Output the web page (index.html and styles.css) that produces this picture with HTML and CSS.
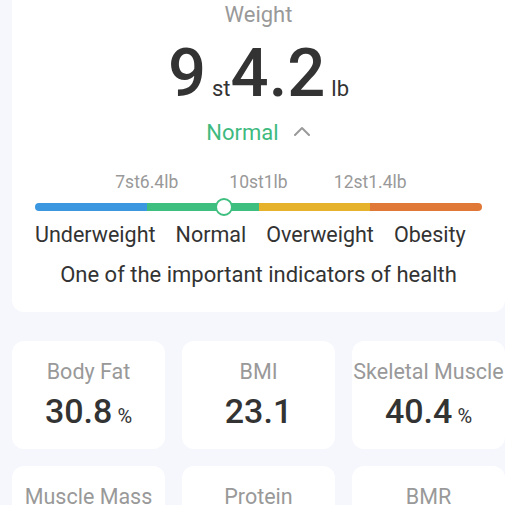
FILE: index.html
```html
<!DOCTYPE html>
<html lang="en">
<head>
    <meta charset="UTF-8">
    <meta name="viewport" content="width=device-width, initial-scale=1.0">
    <title>Weight</title>
    <link rel="stylesheet" href="styles.css">
</head>
<body>
    <div class="page">
        <!-- Weight card -->
        <div class="weight-card">
            <div class="weight-title">Weight</div>
            <div class="weight-value">
                <span class="big">9</span><span class="unit">st</span><span class="big">4.2</span><span class="unit">lb</span>
            </div>
            <div class="status">
                <span class="status-text">Normal</span>
                <svg class="chevron" width="18" height="10" viewBox="0 0 18 10">
                    <path d="M2 9 L9 2 L16 9" fill="none" stroke="#9a9a9a" stroke-width="2" stroke-linecap="round" stroke-linejoin="round"/>
                </svg>
            </div>

            <div class="scale">
                <div class="scale-marks">
                    <span class="mark">7st6.4lb</span>
                    <span class="mark">10st1lb</span>
                    <span class="mark">12st1.4lb</span>
                </div>
                <div class="bar">
                    <div class="seg seg-blue"></div>
                    <div class="seg seg-green"></div>
                    <div class="seg seg-yellow"></div>
                    <div class="seg seg-orange"></div>
                    <div class="marker" style="left: 42%"></div>
                </div>
                <div class="scale-labels">
                    <span>Underweight</span>
                    <span>Normal</span>
                    <span>Overweight</span>
                    <span>Obesity</span>
                </div>
            </div>

            <p class="hint">One of the important indicators of health</p>
        </div>

        <!-- Stats -->
        <div class="stats">
            <div class="stat">
                <div class="stat-name">Body Fat</div>
                <div class="stat-value">30.8<span class="pct">%</span></div>
            </div>
            <div class="stat">
                <div class="stat-name">BMI</div>
                <div class="stat-value">23.1</div>
            </div>
            <div class="stat">
                <div class="stat-name">Skeletal Muscle</div>
                <div class="stat-value">40.4<span class="pct">%</span></div>
            </div>
            <div class="stat">
                <div class="stat-name">Muscle Mass</div>
                <div class="stat-value">--</div>
            </div>
            <div class="stat">
                <div class="stat-name">Protein</div>
                <div class="stat-value">--</div>
            </div>
            <div class="stat">
                <div class="stat-name">BMR</div>
                <div class="stat-value">--</div>
            </div>
        </div>
    </div>
</body>
</html>
```

FILE: styles.css
```css
body {
    margin: 0;
    font-family: Roboto, "Liberation Sans", sans-serif;
    background-color: #f6f7fd;
    color: #333;
    overflow: hidden;
}

.page {
    width: 493px;
    padding-left: 12px;
}

.weight-card {
    background-color: white;
    border-radius: 0 0 12px 12px;
    padding: 3px 0 1px;
    text-align: center;
}

.weight-title {
    font-size: 22px;
    line-height: 24px;
    color: #999;
}

.weight-value {
    margin-top: 6px;
    line-height: 80px;
    height: 80px;
}

.weight-value .big {
    font-size: 67px;
    font-weight: 500;
}

.weight-value .unit {
    font-size: 22px;
    margin-left: 6px;
}

.status {
    margin-top: 4px;
    display: flex;
    justify-content: center;
    align-items: center;
    gap: 14px;
    height: 30px;
}

.status-text {
    font-size: 22px;
    color: #3fba7f;
}

.chevron {
    margin-top: -2px;
}

.scale {
    margin: 25px 23px 0;
}

.scale-marks {
    position: relative;
    height: 24px;
    font-size: 17.5px;
    color: #999;
}

.mark {
    position: absolute;
    top: 0;
    transform: translateX(-50%);
}

.mark:nth-child(1) { left: 25%; }
.mark:nth-child(2) { left: 50%; }
.mark:nth-child(3) { left: 75%; }

.bar {
    position: relative;
    display: flex;
    height: 8px;
    margin-top: 7px;
    border-radius: 4px;
}

.seg {
    flex: 1;
}

.seg-blue {
    background-color: #3a97e0;
    border-radius: 4px 0 0 4px;
}

.seg-green {
    background-color: #3fbf7f;
}

.seg-yellow {
    background-color: #e6b12b;
}

.seg-orange {
    background-color: #e07838;
    border-radius: 0 4px 4px 0;
}

.marker {
    position: absolute;
    top: -5px;
    width: 14px;
    height: 14px;
    margin-left: -8px;
    border: 2px solid #3fbf7f;
    border-radius: 50%;
    background-color: white;
}

.scale-labels {
    display: flex;
    gap: 20px;
    margin-top: 11px;
    font-size: 21.5px;
    line-height: 26px;
    color: #333;
}

.hint {
    margin: 14px 0 23px;
    font-size: 22px;
    line-height: 26px;
}

.stats {
    display: grid;
    grid-template-columns: repeat(3, 153px);
    gap: 17px;
    margin-top: 29px;
}

.stat {
    background-color: white;
    border-radius: 12px;
    height: 108px;
    text-align: center;
    white-space: nowrap;
}

.stat-name {
    margin-top: 18px;
    font-size: 21.5px;
    line-height: 26px;
    color: #999;
}

.stat-value {
    margin-top: 6px;
    font-size: 34px;
    font-weight: 500;
    line-height: 40px;
    color: #333;
}

.stat-value .pct {
    font-size: 20px;
    font-weight: 400;
    margin-left: 5px;
}
```
